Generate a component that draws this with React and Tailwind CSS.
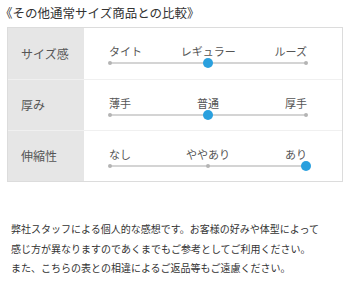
const rows = [
  { label: 'サイズ感', opts: ['タイト', 'レギュラー', 'ルーズ'], pos: 1 },
  { label: '厚み', opts: ['薄手', '普通', '厚手'], pos: 1 },
  { label: '伸縮性', opts: ['なし', 'ややあり', 'あり'], pos: 2 },
];

const Slider = ({ opts, pos }) => (
  <div className="flex-1 flex flex-col pt-[16px] pl-[25px] pr-[35px]">
    <div className="flex justify-between text-[11px] leading-[14px] text-[#555]">
      {opts.map((o) => (
        <span key={o}>{o}</span>
      ))}
    </div>
    <div className="relative h-[10px] flex items-center">
      <div className="w-full h-[2px] bg-[#d4d4d4]" />
      <div className="absolute inset-0 flex items-center justify-between">
        {opts.map((o, i) =>
          i === pos ? (
            <span key={o} className="w-[10px] h-[10px] rounded-full bg-[#2aa0de] -mx-[4px]" />
          ) : (
            <span key={o} className="w-[4px] h-[4px] rounded-full bg-[#b4b4b4] -mx-[1px]" />
          )
        )}
      </div>
    </div>
  </div>
);

const App = () => {
  return (
    <div className="w-[350px] h-[300px] bg-white font-['Noto_Sans_CJK_JP',sans-serif] text-[#333]">
      <h1 className="pt-[4px] text-[12.5px] leading-[17px] font-normal">《その他通常サイズ商品との比較》</h1>

      <div className="mt-[6px] ml-[7px] w-[336px] border border-[#dcdcdc] flex flex-col">
        {rows.map((r, i) => (
          <div
            key={r.label}
            className={`flex h-[51px] ${i > 0 ? 'border-t border-[#f0f0f0]' : ''}`}
          >
            <div className="w-[76px] bg-[#e6e6e6] flex items-center pl-[13px] text-[12px] text-[#555]">
              {r.label}
            </div>
            <Slider opts={r.opts} pos={r.pos} />
          </div>
        ))}
      </div>

      <p className="mt-[37px] pl-[11px] text-[10px] leading-[19.5px] text-[#333]">
        弊社スタッフによる個人的な感想です。お客様の好みや体型によって
        <br />
        感じ方が異なりますのであくまでもご参考としてご利用ください。
        <br />
        また、こちらの表との相違によるご返品等もご遠慮ください。
      </p>
    </div>
  );
};

export default App;
